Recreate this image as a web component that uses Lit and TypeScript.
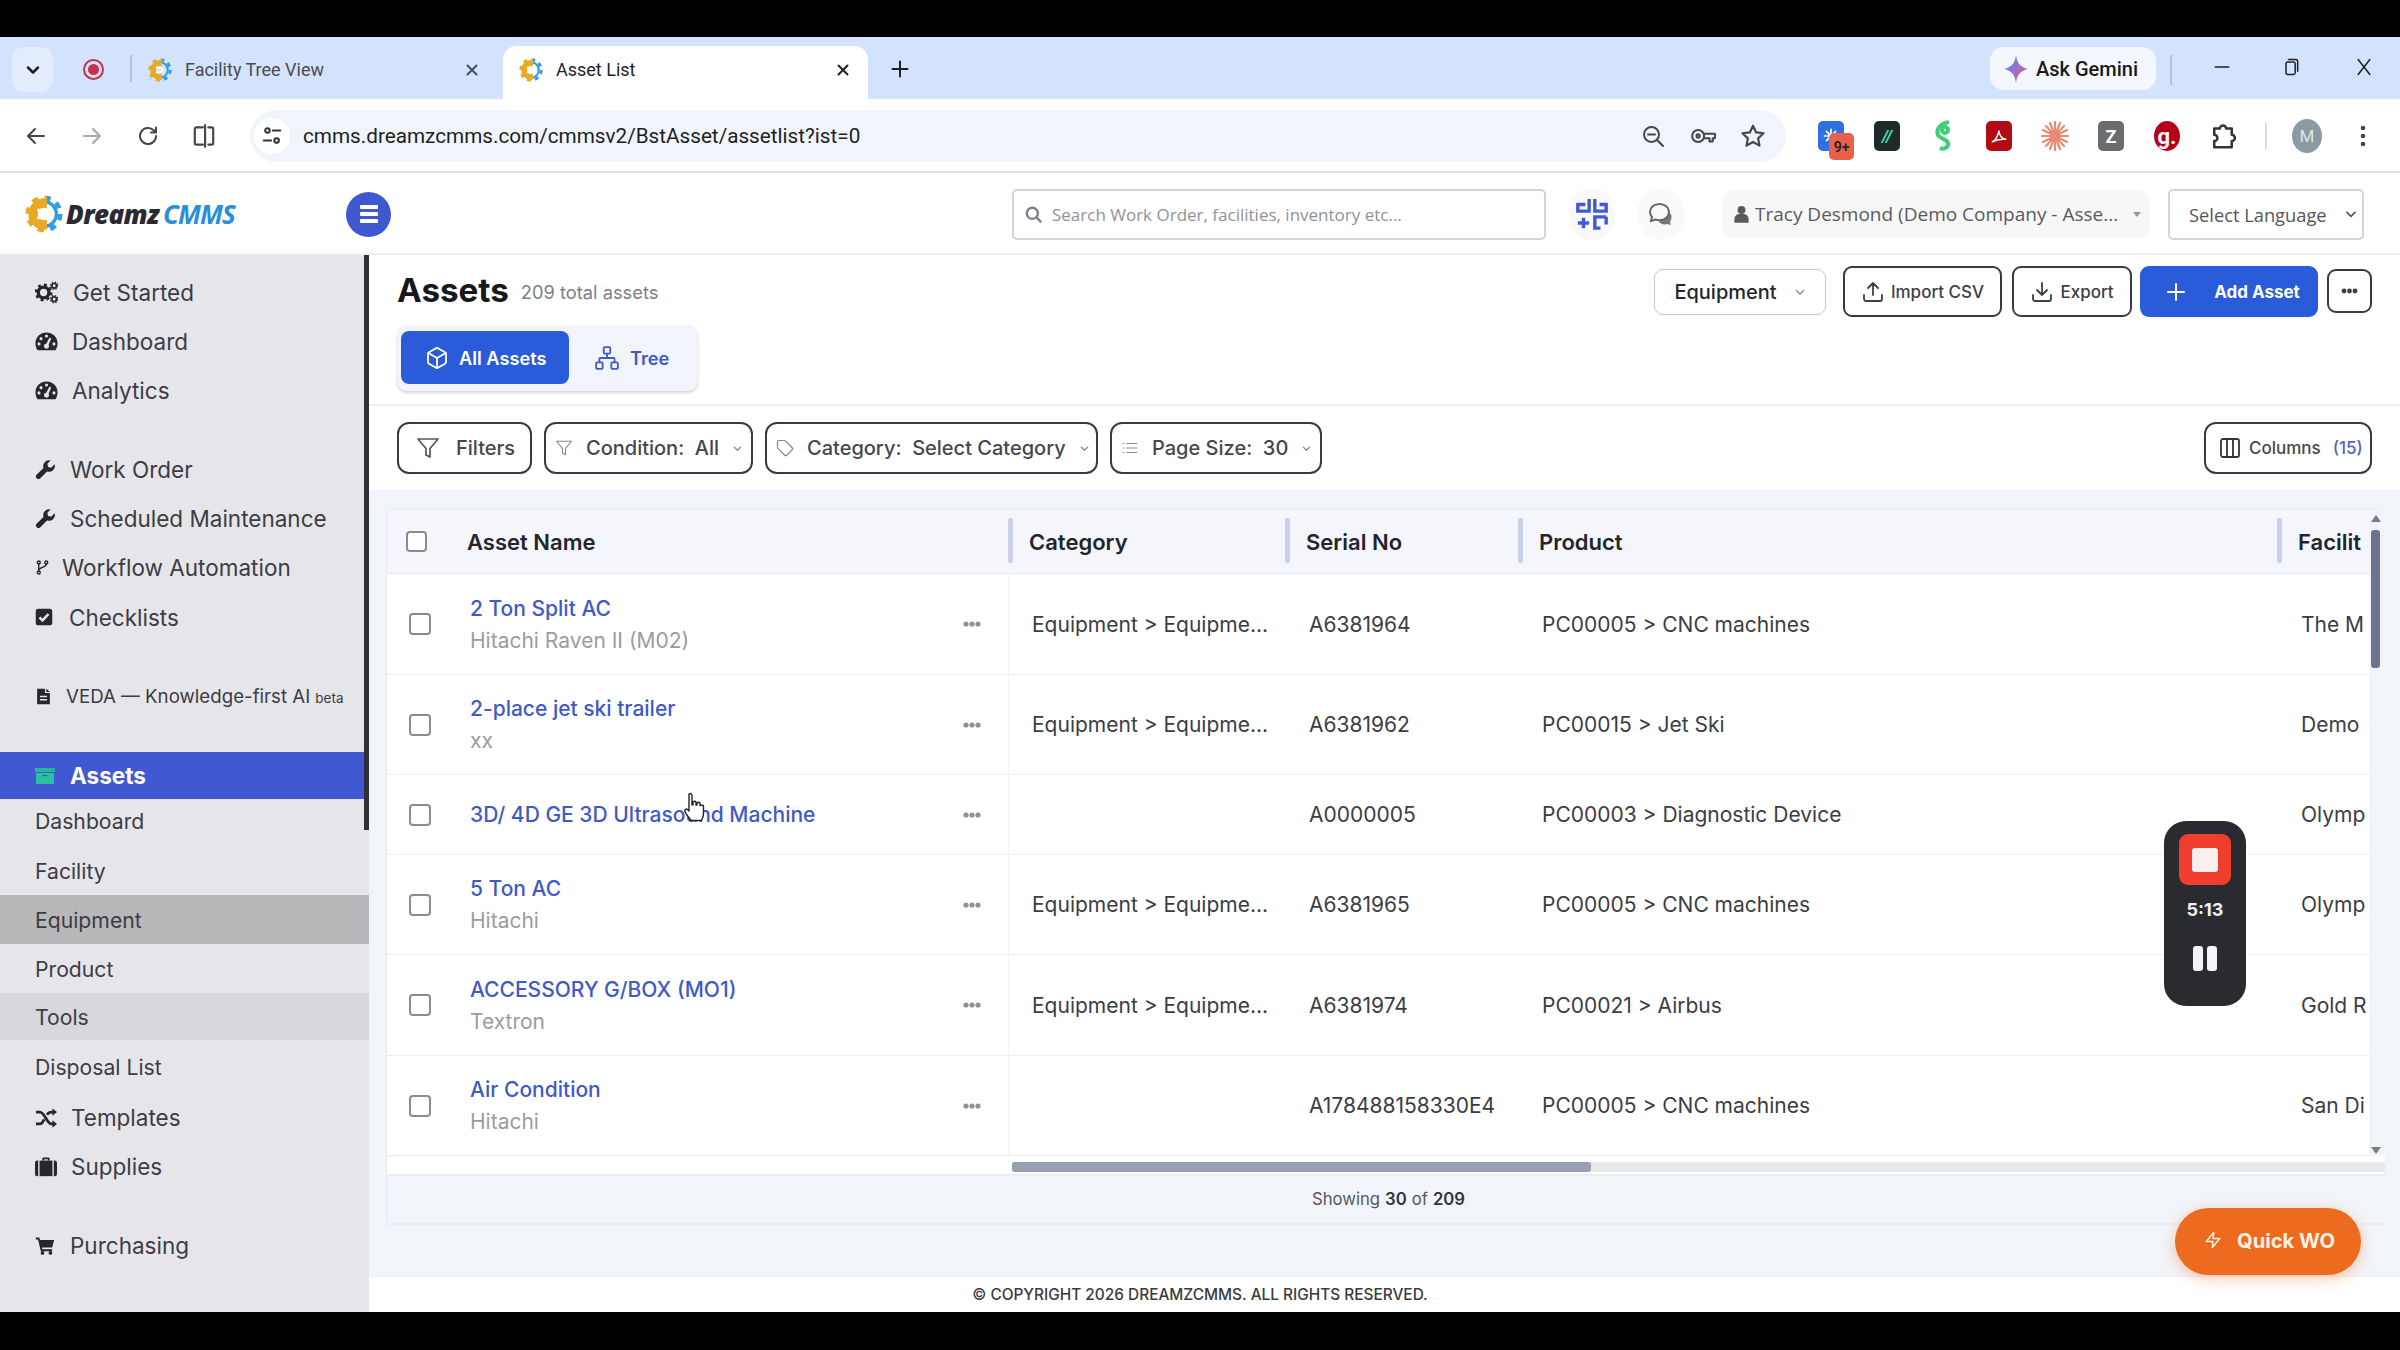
import { LitElement, html, css, svg } from "lit";
import { customElement } from "lit/decorators.js";

const ln = (paths: any, size = 22, sw = 2) => html`<svg class="ic" width=${size} height=${size} viewBox="0 0 24 24" fill="none" stroke="currentColor" stroke-width=${sw} stroke-linecap="round" stroke-linejoin="round">${paths}</svg>`;
const fl = (paths: any, w = 24, h = 24, vb = "0 0 24 24") => html`<svg class="ic" width=${w} height=${h} viewBox=${vb} fill="currentColor">${paths}</svg>`;

const gear = (size: number, uid: string) => html`<svg class="ic" width=${size} height=${size} viewBox="0 0 40 40">
  <defs><clipPath id="l${uid}"><rect x="0" y="0" width="23" height="40"/></clipPath><clipPath id="r${uid}"><rect x="23" y="0" width="17" height="40"/></clipPath></defs>
  <g clip-path="url(#l${uid})" fill="none" stroke="#e8a923"><circle cx="20" cy="20" r="11.500" stroke-width="10"/><circle cx="20" cy="20" r="17" stroke-width="5" stroke-dasharray="6.500 6.850"/></g>
  <g clip-path="url(#r${uid})" fill="none" stroke="#2f9fdf"><circle cx="20" cy="20" r="13" stroke-width="3.500"/><circle cx="20" cy="20" r="17" stroke-width="5" stroke-dasharray="6.500 6.850"/></g>
  <path d="M13 16h7a4 4 0 0 1 0 8h-7" fill="none" stroke="#fff" stroke-width="3"/>
</svg>`;

const ICONS: Record<string, any> = {
  cogs: fl(svg`<circle cx="9" cy="12" r="5.600" fill="none" stroke="currentColor" stroke-width="3.600"/><circle cx="9" cy="12" r="8" fill="none" stroke="currentColor" stroke-width="2.600" stroke-dasharray="3 3.300"/><circle cx="20" cy="5" r="2.400" fill="none" stroke="currentColor" stroke-width="1.800"/><circle cx="20" cy="19" r="2.400" fill="none" stroke="currentColor" stroke-width="1.800"/><circle cx="20" cy="5" r="3.800" fill="none" stroke="currentColor" stroke-width="1.300" stroke-dasharray="1.600 1.400"/><circle cx="20" cy="19" r="3.800" fill="none" stroke="currentColor" stroke-width="1.300" stroke-dasharray="1.600 1.400"/>`, 23, 23),
  gauge: fl(svg`<path d="M12 2.500A11.500 11.500 0 0 0 .5 14c0 2.600.8 5 2.200 7h18.600c1.400-2 2.200-4.400 2.200-7A11.500 11.500 0 0 0 12 2.500z"/><g fill="#e6e6ea"><circle cx="12" cy="6.200" r="1.600"/><circle cx="6.300" cy="9" r="1.600"/><circle cx="4.200" cy="14.500" r="1.600"/><circle cx="19.800" cy="14.500" r="1.600"/><circle cx="12" cy="17" r="2.600"/><path d="M11 16l4-8 2 .8-3.400 8z"/></g>`, 23, 23),
  wrench: fl(svg`<path d="M16 1.500a6.600 6.600 0 0 0-6.300 8.700L2 17.800a2.900 2.900 0 1 0 4.100 4.100l7.700-7.700A6.600 6.600 0 0 0 22.400 6l-3.900 3.900-3.500-.9-.9-3.500L17.900 1.700A6.600 6.600 0 0 0 16 1.500z"/>`, 21, 21),
  branch: ln(svg`<circle cx="6" cy="4" r="2.400"/><circle cx="6" cy="20" r="2.400"/><circle cx="18" cy="4" r="2.400"/><path d="M6 6.400v11.200M18 6.400c0 6-12 4.600-12 10"/>`, 15, 2.200),
  check: fl(svg`<rect x="1" y="1" width="22" height="22" rx="3.500"/><path d="M6 12.500l4 4 8-8.500" fill="none" stroke="#e6e6ea" stroke-width="3.400"/>`, 18, 18),
  file: fl(svg`<path d="M3 1h11v6h7v16H3z"/><path d="M16 1l5 4.500h-5z"/><path d="M7 12h10M7 16.500h10" stroke="#e6e6ea" stroke-width="2"/>`, 17, 19),
  box: html`<svg class="ic" width="20" height="16" viewBox="0 0 20 16"><path d="M0 0h20v4H0z" fill="#29b59c"/><path d="M1 5h18v11H1z" fill="#2bbfa3"/><path d="M7.500 7h5v1.200h-5z" fill="#1e6f68"/></svg>`,
  random: fl(svg`<path d="M1 5.500h4.500c5 0 7.500 13 12.500 13h1.500M1 18.500h4.500c2.500 0 3.500-3 4.500-5M13 8.500c1.200-1.700 2.800-3 5-3h1.500" fill="none" stroke="currentColor" stroke-width="3"/><path d="M19 1.500l5 4-5 4zM19 14.500l5 4-5 4z"/>`, 22, 22),
  case: fl(svg`<path d="M8 5V3a1.500 1.500 0 0 1 1.500-1.500h5A1.500 1.500 0 0 1 16 3v2h-2V3.500h-4V5z"/><rect x="5" y="5" width="14" height="17"/><path d="M0 7.500A2.500 2.500 0 0 1 2.500 5H3.500v17H2.500A2.500 2.500 0 0 1 0 19.500zM24 7.500A2.500 2.500 0 0 0 21.500 5H20.500v17h1A2.500 2.500 0 0 0 24 19.500z"/>`, 22, 22),
  cart: fl(svg`<path d="M1 3h4.200l.8 3h17l-2.400 9H8.400l.5 2h11.600v2.400H7L3.600 5.400H1z"/><circle cx="9" cy="21.500" r="2.200"/><circle cx="18.500" cy="21.500" r="2.200"/>`, 20, 20),
};

const NAV = [
  { t: "Get Started", i: "cogs", x: 15, h: 49 },
  { t: "Dashboard", i: "gauge", x: 14, h: 49 },
  { t: "Analytics", i: "gauge", x: 14, h: 49, gap: 30 },
  { t: "Work Order", i: "wrench", x: 14, h: 49 },
  { t: "Scheduled Maintenance", i: "wrench", x: 14, h: 49 },
  { t: "Workflow Automation", i: "branch", x: 12, h: 49 },
  { t: "Checklists", i: "check", x: 16, h: 50, gap: 30 },
];

const SUBS = [
  { t: "Dashboard", c: "top" }, { t: "Facility", c: "" }, { t: "Equipment", c: "hover" },
  { t: "Product", c: "" }, { t: "Tools", c: "soft" }, { t: "Disposal List", c: "" },
];

const ROWS = [
  { n: "2 Ton Split AC", s: "Hitachi Raven II (M02)", c: "Equipment > Equipme...", sn: "A6381964", p: "PC00005 > CNC machines", f: "The M", h: 101 },
  { n: "2-place jet ski trailer", s: "xx", c: "Equipment > Equipme...", sn: "A6381962", p: "PC00015 > Jet Ski", f: "Demo", h: 100 },
  { n: "3D/ 4D GE 3D Ultrasound Machine", s: "", c: "", sn: "A0000005", p: "PC00003 > Diagnostic Device", f: "Olymp", h: 80 },
  { n: "5 Ton AC", s: "Hitachi", c: "Equipment > Equipme...", sn: "A6381965", p: "PC00005 > CNC machines", f: "Olymp", h: 100 },
  { n: "ACCESSORY G/BOX (MO1)", s: "Textron", c: "Equipment > Equipme...", sn: "A6381974", p: "PC00021 > Airbus", f: "Gold R", h: 101 },
  { n: "Air Condition", s: "Hitachi", c: "", sn: "A178488158330E4", p: "PC00005 > CNC machines", f: "San Di", h: 100 },
];

const chev = (w = 12) => html`<svg class="ic" width=${w} height=${w} viewBox="0 0 12 12" fill="none" stroke="currentColor" stroke-width="1.500" stroke-linecap="round" stroke-linejoin="round"><path d="M2.500 4.500 6 8l3.500-3.500"/></svg>`;
const filterIc = (s: number, sw = 1.6) => ln(svg`<path d="M22 3H2l8 9.460V19l4 2v-8.540z"/>`, s, sw);

@customElement("app-root")
export class AppRoot extends LitElement {
  static styles = css`
    :host { display: block; width: 2400px; height: 1350px; font-family: Inter, "Liberation Sans", sans-serif; color: #333; }
    * { box-sizing: border-box; }
    .ic { display: block; flex: none; }
    .frame { position: relative; width: 2400px; height: 1350px; overflow: hidden; display: flex; flex-direction: column; background: #fff; }
    .black-top { height: 37px; background: #000; flex: none; }
    .black-bottom { height: 38px; background: #000; flex: none; }

    .tabstrip { height: 62px; flex: none; display: flex; align-items: flex-start; background: #d3e3fd; padding-left: 12px; font-family: Roboto, sans-serif; font-size: 18px; }
    .tabsearch { width: 41px; height: 45px; margin-top: 10px; border-radius: 12px; background: #e4edfd; display: flex; align-items: center; justify-content: center; color: #1f1f1f; }
    .rec { margin: 22px 0 0 30px; width: 21px; height: 21px; border-radius: 50%; border: 2px solid #c2334d; display: flex; align-items: center; justify-content: center; }
    .rec i { display: block; width: 11px; height: 11px; border-radius: 50%; background: #c9304b; }
    .tabsep { width: 2px; height: 27px; margin: 18px 0 0 26px; background: #b4c4dc; }
    .tab { width: 365px; height: 53px; margin-top: 9px; padding: 0 16px 6px 16px; display: flex; align-items: center; gap: 13px; color: #4a4c50; }
    .tab.active { background: #fff; border-radius: 14px 14px 0 0; margin-left: 6px; color: #1f1f1f; }
    .tab span { flex: 1; }
    .plus { margin: 22px 0 0 22px; color: #1f1f1f; }
    .spacer { flex: 1; }
    .gemini { width: 166px; height: 43px; margin-top: 10px; border-radius: 14px; background: #f4f7fe; display: flex; align-items: center; padding-left: 14px; gap: 8px; color: #1a1a1a; font-weight: 500; font-size: 20px; }
    .winsep { width: 2px; height: 30px; margin: 18px 15px 0 14px; background: #b4c4dc; }
    .winbtn { width: 69px; height: 62px; margin-top: -1px; display: flex; align-items: center; justify-content: center; color: #1f1f1f; }
    .winbtn.x { margin-left: 4px; margin-right: 2px; }

    .toolbar { height: 74px; flex: none; display: flex; align-items: center; padding-left: 8px; padding-top: 2px; background: #fff; border-bottom: 2px solid #e3e3e5; font-family: Roboto, sans-serif; }
    .navbtn { width: 56px; display: flex; justify-content: center; color: #444746; }
    .navbtn.dim { color: #a5a8ac; }
    .pill { width: 1536px; height: 52px; margin-left: 18px; border-radius: 26px; background: #f0f4fb; display: flex; align-items: center; padding-left: 4px; padding-right: 8px; }
    .site { width: 36px; height: 36px; border-radius: 50%; background: #fff; display: flex; align-items: center; justify-content: center; color: #333; }
    .url { margin-left: 13px; font-size: 20.700px; color: #1f1f1f; flex: 1; }
    .pillbtn { width: 50px; display: flex; justify-content: center; color: #444746; }
    .exts { display: flex; margin-left: 17px; }
    .ext { width: 56px; height: 34px; display: flex; justify-content: center; align-items: center; position: relative; }
    .ext b { display: flex; align-items: center; justify-content: center; width: 26px; height: 30px; border-radius: 5px; color: #fff; font-weight: 700; font-size: 18px; }
    .badge { position: absolute; left: 26px; top: 14px; width: 25px; height: 27px; border-radius: 5px; background: #e8604c; color: #222; font-size: 14px; font-weight: 600; display: flex; align-items: center; justify-content: center; }
    .tsep { width: 2px; height: 28px; margin-left: 14px; background: #dadce0; }
    .avatar { width: 30px; height: 34px; margin-left: 25px; border-radius: 50%; background: #8c9ba3; color: #dfe6ea; font-size: 17px; display: flex; align-items: center; justify-content: center; }
    .dots { width: 40px; margin-left: 21px; display: flex; justify-content: center; color: #444746; }

    .apphead { height: 82px; flex: none; display: flex; align-items: center; padding-left: 25px; border-bottom: 2px solid #eef0f2; padding-top: 2px; }
    .logo { display: flex; align-items: center; width: 321px; font-style: italic; font-weight: 800; font-size: 26px; font-family: "Open Sans", sans-serif; color: #2a2a30; }
    .logo .d { margin-left: 3px; letter-spacing: -.6px; }
    .logo .c { margin-left: 4px; color: #2a8fd8; font-weight: 700; letter-spacing: -.9px; }
    .burger { width: 45px; height: 45px; border-radius: 50%; background: #3f58cf; display: flex; flex-direction: column; align-items: center; justify-content: center; gap: 3px; }
    .burger i { display: block; width: 18px; height: 4px; border-radius: 1px; background: #fff; }
    .search { width: 534px; height: 51px; margin-left: 621px; border: 2px solid #d4d4d6; border-radius: 5px; display: flex; align-items: center; padding-left: 10px; gap: 9px; font-size: 17px; font-family: "Open Sans", sans-serif; color: #7d8086; }
    .search span { color: #8f9296; }
    .hicon { width: 46px; height: 52px; border-radius: 23px; background: #f9f9fb; display: flex; align-items: center; justify-content: center; }
    .h1 { margin-left: 23px; color: #3f5bd0; }
    .h2 { margin-left: 23px; color: #666; }
    .user { width: 428px; height: 48px; margin-left: 38px; border-radius: 14px; background: #f7f7f8; display: flex; align-items: center; padding-left: 10px; gap: 4px; color: #5a5a5e; font-size: 19px; font-family: "Open Sans", sans-serif; }
    .user span { flex: 1; white-space: nowrap; }
    .user .car { width: 0; height: 0; border-left: 4px solid transparent; border-right: 4px solid transparent; border-top: 5px solid #999; margin-right: 9px; }
    .lang { width: 196px; height: 51px; margin-left: 18px; border: 2px solid #d4d4d6; border-radius: 5px; display: flex; align-items: center; padding-left: 19px; gap: 17px; color: #555; font-size: 18.300px; font-family: "Open Sans", sans-serif; white-space: nowrap; }

    .body { flex: 1; min-height: 0; display: flex; }
    .side { position: relative; width: 369px; flex: none; background: #e6e6ea; padding-top: 13px; color: #3c3c44; font-size: 22.500px; }
    .thumb { position: absolute; right: 0; top: 0; width: 5px; height: 575px; background: #303036; }
    .nav { display: flex; align-items: center; padding-left: 35px; color: #3c3c44; }
    .nav .ic { color: #26262c; }
    .nav.veda { height: 49px; margin-bottom: 31px; font-size: 18.700px; gap: 14px; }
    .nav.veda small { font-size: 13.500px; margin-left: 5px; }
    .nav.veda em { font-style: normal; }
    .nav.cur { height: 47px; width: 364px; background: #4059d3; color: #fff; font-weight: 700; gap: 15px; }
    .sub { height: 49px; padding-left: 35px; display: flex; align-items: center; font-size: 21.200px; }
    .sub.top { height: 47px; padding-bottom: 4px; }
    .sub.hover { background: #b8b8ba; }
    .sub.soft { background: #d8d8dc; height: 47px; margin-bottom: 2px; }
    .nav.t1 { height: 49px; gap: 14px; margin-top: 2px; }
    .nav.t2 { height: 49px; gap: 14px; margin-bottom: 30px; }
    .nav.t3 { height: 48px; gap: 15px; }

    .main { flex: 1; min-width: 0; display: flex; flex-direction: column; }
    .pagehead { height: 151px; flex: none; display: flex; justify-content: space-between; padding: 11px 28px 0; border-bottom: 2px solid #eceef1; }
    .titlerow { height: 48px; display: flex; align-items: center; gap: 12px; margin-bottom: 11px; }
    .titlerow h1 { margin: 0; font-size: 33.200px; font-weight: 700; color: #17181c; }
    .titlerow span { font-size: 18.300px; color: #7c7f86; margin-top: 4px; }
    .seg { width: 301px; height: 66px; border-radius: 10px; background: #f2f4fb; box-shadow: 0 2px 3px rgba(60,60,80,.22); padding: 6px 4px; display: flex; }
    .seg button { all: unset; box-sizing: border-box; display: flex; align-items: center; font-size: 18.200px; font-weight: 600; font-family: Inter, sans-serif; gap: 10px; }
    .seg .on { width: 168px; height: 53px; padding-left: 24px; border-radius: 8px; background: #2a5bd8; color: #fff; }
    .seg .off { padding-left: 25px; color: #3f5bc4; }
    .actions { display: flex; align-items: flex-start; }
    .btn { display: flex; align-items: center; justify-content: center; background: #fff; border: 2px solid #3a3a40; border-radius: 9px; color: #3e4047; font-size: 17px; font-weight: 500; }
    .eq { width: 172px; height: 46px; margin-top: 3px; border: 1.500px solid #c3c6de; gap: 17px; font-size: 20px; color: #24262c; font-weight: 500; }
    .eq .ic { color: #8a8d96; }
    .imp { width: 159px; height: 51px; margin-left: 17px; gap: 6px; }
    .exp { width: 120px; height: 51px; margin-left: 10px; gap: 6px; }
    .add { width: 178px; height: 51px; margin-left: 8px; background: #2a5bd8; border: 0; color: #fff; font-weight: 700; gap: 26px; padding-left: 6px; }
    .more { width: 45px; height: 44px; margin-left: 9px; margin-top: 3px; }

    .filters { height: 84px; flex: none; display: flex; align-items: center; padding: 0 28px; gap: 12px; background: #fff; }
    .f { height: 52px; border: 2px solid #3a3a40; border-radius: 12px; display: flex; align-items: center; font-size: 20px; font-weight: 500; color: #45474e; white-space: nowrap; }
    .f .lbl { white-space: pre; }
    .f .ic { color: #85888f; }
    .f .chv { margin-left: auto; }
    .f1 { width: 135px; padding-left: 17px; gap: 16px; }
    .f1 .ic { color: #555; }
    .f2, .f3, .f4 { padding: 0 9px; gap: 13px; }
    .f2 { width: 209px; }
    .f3 { width: 333px; }
    .f4 { width: 212px; }
    .cols { width: 168px; margin-left: auto; height: 52px; border: 2px solid #3a3a40; border-radius: 12px; display: flex; align-items: center; padding-left: 12px; gap: 7px; font-size: 17px; font-weight: 500; color: #45474e; white-space: nowrap; }
    .cols b { font-weight: 500; color: #5461c8; margin-left: 5px; }
    .cols .ic { color: #333; }

    .area { flex: 1; min-height: 0; background: #f1f4f8; padding: 18px 15px 0 17px; }
    .card { position: relative; height: 717px; border-top: 2px solid #eceff4; border-left: 1px solid #e6e9ef; background: #f1f4f8; border-radius: 6px 6px 0 0; border-bottom: 2px solid #e9ecf1; }
    .scroll { overflow: hidden; width: 1982px; background: #fff; }
    .thead { display: grid; grid-template-columns: 622px 277px 233px 759px 120px; height: 64px; background: #f4f6fc; border-bottom: 1px solid #e6e9f0; font-weight: 600; font-size: 22px; color: #23252c; width: 2011px; }
    .th { display: flex; align-items: center; padding-left: 16px; border-left: 4px solid transparent; position: relative; }
    .th.bar::before { content: ""; position: absolute; left: -5px; top: 8px; bottom: 10px; width: 5px; background: #c9d1ea; border-radius: 2px; }
    .th.first { padding-left: 19px; border: 0; }
    .th.first .lab { margin-left: 40px; }
    .th .box { width: 21px; height: 21px; }
    .row { display: grid; grid-template-columns: 622px 277px 233px 759px 120px; border-bottom: 1px solid #eceef2; font-size: 21px; color: #3b3d44; width: 2011px; align-items: stretch; }
    .cell { display: flex; align-items: center; padding-left: 23px; white-space: nowrap; }
    .namecell { padding-left: 22px; border-right: 1px solid #f0f1f5; gap: 39px; }
    .box { width: 22px; height: 22px; flex: none; border: 2px solid #8a8b90; border-radius: 4px; background: #fff; }
    .nm { width: 454px; display: flex; flex-direction: column; gap: 9px; }
    .nm a { color: #3f5ac6; font-weight: 500; line-height: 23px; }
    .nm span { color: #9a9ca2; line-height: 23px; }
    .rowdots { color: #8f9197; }
    .hbar { height: 20px; background: #fff; padding-top: 6px; border-bottom: 2px solid #e9ecf1; padding-left: 626px; }
    .hbar div { height: 10px; background: #e8e8ea; position: relative; margin-left: -1px; }
    .hbar i { display: block; width: 579px; height: 10px; background: #999eb3; border-radius: 3px; }
    .tfoot { height: 46px; display: flex; align-items: center; justify-content: center; padding-left: 10px; font-size: 16.700px; color: #55575e; }
    .tfoot b { color: #33353b; font-weight: 600; margin: 0 5px; }
    .vbar { position: absolute; right: 0; top: 3px; width: 17px; height: 642px; }
    .vbar .th1 { position: absolute; left: 3px; top: 17px; width: 9px; height: 138px; background: #6b7390; border-radius: 3px; }
    .vbar .up, .vbar .dn { position: absolute; left: 3px; width: 0; height: 0; border-left: 5px solid transparent; border-right: 5px solid transparent; }
    .vbar .up { top: 2px; border-bottom: 7px solid #777a88; }
    .vbar .dn { bottom: 1px; border-top: 7px solid #777a88; }

    .foot { height: 35px; flex: none; background: #fff; display: flex; align-items: center; justify-content: center; padding-right: 369px; font-size: 15.400px; font-weight: 500; color: #3a3a40; }

    .recw { position: absolute; left: 2164px; top: 821px; width: 82px; height: 185px; border-radius: 22px; background: #2a2b30; display: flex; flex-direction: column; align-items: center; padding-top: 13px; color: #eee; }
    .recw .stop { width: 52px; height: 51px; border-radius: 9px; background: #ef3e2e; display: flex; align-items: center; justify-content: center; }
    .recw .stop i { display: block; width: 26px; height: 24px; border-radius: 3px; background: #fbeeee; }
    .recw .tm { margin-top: 14px; font-size: 18px; font-weight: 700; }
    .recw .pz { margin-top: 26px; display: flex; gap: 4px; }
    .recw .pz i { display: block; width: 10px; height: 25px; border-radius: 3px; background: #f4f4f4; }
    .quick { position: absolute; left: 2175px; top: 1208px; width: 186px; height: 67px; border-radius: 34px; background: #ec6b1e; box-shadow: 0 4px 14px rgba(236,107,30,.35); color: #fff1e6; display: flex; align-items: center; padding: 0 0 3px 29px; gap: 15px; font-size: 20.200px; font-weight: 700; }
    .cursor { position: absolute; left: 684px; top: 792px; color: #222; }
  `;

  private nav(n: any) {
    return html`<div class="nav" style="height:${n.h}px;gap:${n.x}px;${n.gap ? `margin-bottom:${n.gap}px` : ""}">${ICONS[n.i]}<span>${n.t}</span></div>`;
  }

  private row(r: any) {
    return html`<div class="row" style="height:${r.h}px">
      <div class="cell namecell"><div class="box"></div><div class="nm"><a>${r.n}</a>${r.s ? html`<span>${r.s}</span>` : ""}</div>
        <div class="rowdots">${fl(svg`<circle cx="3" cy="6" r="2.600"/><circle cx="9" cy="6" r="2.600"/><circle cx="15" cy="6" r="2.600"/>`, 18, 12, "0 0 18 12")}</div></div>
      <div class="cell">${r.c}</div><div class="cell">${r.sn}</div><div class="cell">${r.p}</div><div class="cell">${r.f}</div>
    </div>`;
  }

  render() {
    return html`<div class="frame">
      <div class="black-top"></div>
      <div class="tabstrip">
        <div class="tabsearch">${ln(svg`<path d="m6 9 6 6 6-6"/>`, 20, 3)}</div>
        <div class="rec"><i></i></div>
        <div class="tabsep"></div>
        <div class="tab">${gear(24, "a")}<span>Facility Tree View</span>${ln(svg`<path d="M6 6l12 12M18 6 6 18"/>`, 18, 2.600)}</div>
        <div class="tab active">${gear(24, "b")}<span>Asset List</span>${ln(svg`<path d="M6 6l12 12M18 6 6 18"/>`, 18, 2.600)}</div>
        <div class="plus">${ln(svg`<path d="M12 3v18M3 12h18"/>`, 20, 2.400)}</div>
        <div class="spacer"></div>
        <div class="gemini"><svg class="ic" width="24" height="28" viewBox="0 0 24 28"><defs><linearGradient id="gm" x1="0" y1="0" x2="1" y2="1"><stop offset="0" stop-color="#4285f4"/><stop offset=".5" stop-color="#9b72cb"/><stop offset="1" stop-color="#e8543f"/></linearGradient></defs><path d="M12 0c1 8 4 12 12 14-8 2-11 6-12 14-1-8-4-12-12-14 8-2 11-6 12-14z" fill="url(#gm)"/></svg><span>Ask Gemini</span></div>
        <div class="winsep"></div>
        <div class="winbtn">${ln(svg`<path d="M4 12h16"/>`, 20, 2)}</div>
        <div class="winbtn">${ln(svg`<rect x="6" y="6" width="11" height="15" rx="2"/><path d="M9 3h9a2 2 0 0 1 2 2v12"/>`, 20, 1.800)}</div>
        <div class="winbtn x">${ln(svg`<path d="M5 3l14 18M19 3 5 21"/>`, 20, 1.800)}</div>
      </div>
      <div class="toolbar">
        <div class="navbtn">${ln(svg`<path d="M20 12H5M11 5l-7 7 7 7"/>`, 24, 2)}</div>
        <div class="navbtn dim">${ln(svg`<path d="M4 12h15M13 5l7 7-7 7"/>`, 24, 2)}</div>
        <div class="navbtn">${ln(svg`<path d="M20 12a8 8 0 1 1-2.400-5.700L20 8.500M20 3.500v5h-5"/>`, 24, 2)}</div>
        <div class="navbtn">${ln(svg`<path d="M11 4H5a1.500 1.500 0 0 0-1.500 1.500v13A1.500 1.500 0 0 0 5 20h6M13 2v20M16 4h3a1.500 1.500 0 0 1 1.500 1.500v13A1.500 1.500 0 0 1 19 20h-3"/>`, 26, 2)}</div>
        <div class="pill">
          <div class="site">${ln(svg`<circle cx="7" cy="6" r="2.500"/><path d="M13 6h8M3 17h8"/><circle cx="17" cy="17" r="2.500"/>`, 22, 2.200)}</div>
          <div class="url">cmms.dreamzcmms.com/cmmsv2/BstAsset/assetlist?ist=0</div>
          <div class="pillbtn">${ln(svg`<circle cx="10.500" cy="10.500" r="7.500"/><path d="M16 16l6 6M7 10.500h7"/>`, 24, 2)}</div>
          <div class="pillbtn">${ln(svg`<circle cx="7.500" cy="12" r="5.500"/><circle cx="7.500" cy="12" r="1.500"/><path d="M13 10h10v4h-2v3h-3v-3h-5"/>`, 26, 1.900)}</div>
          <div class="pillbtn">${ln(svg`<path d="m12 2.500 2.900 6.200 6.800.8-5 4.700 1.300 6.700-6-3.300-6 3.300 1.300-6.700-5-4.700 6.800-.8z"/>`, 26, 2)}</div>
        </div>
        <div class="exts">
          <div class="ext"><b style="background:#2f6fe0">${ln(svg`<path d="M12 4v16M4 12h16M6.500 6.500l11 11M17.500 6.500l-11 11"/>`, 20, 2)}</b><div class="badge">9+</div></div>
          <div class="ext"><b style="background:#1f2a2c;color:#3fe0a8;font-style:italic;font-size:17px">//</b></div>
          <div class="ext"><svg class="ic" width="20" height="32" viewBox="0 0 20 32" fill="none" stroke="#3ecf7a" stroke-width="4"><path d="M16 2C6 4 3 10 5 15c2 4 9 4 10 8 1 4-4 7-8 5"/><circle cx="12" cy="10" r="3"/></svg></div>
          <div class="ext"><b style="background:#b30b13">${ln(svg`<path d="M4 19c3-1 6-6 8-13 .500 5 3 9 8 10-5-.500-11 0-16 3z"/>`, 20, 1.800)}</b></div>
          <div class="ext"><svg class="ic" width="28" height="30" viewBox="0 0 28 30" stroke="#e88b75" stroke-width="2.200" stroke-linecap="round"><path d="M14 1v28M1 15h26M5 5l18 20M23 5 5 25M9 2l10 26M19 2 9 28M2 9l24 12M26 9 2 21"/></svg></div>
          <div class="ext"><b style="background:#6c6c6c">Z</b></div>
          <div class="ext"><b style="background:#b5001c;width:26px;height:30px;border-radius:50%;font-size:22px">g.</b></div>
          <div class="ext" style="color:#333">${ln(svg`<path d="M5 6h4.500a2.500 2.500 0 0 1 5 0H19v5a2.500 2.500 0 0 1 0 5v5H5v-5a2.500 2.500 0 0 0 0-5z"/>`, 30, 2)}</div>
        </div>
        <div class="tsep"></div>
        <div class="avatar">M</div>
        <div class="dots">${fl(svg`<circle cx="12" cy="4" r="2.300"/><circle cx="12" cy="12" r="2.300"/><circle cx="12" cy="20" r="2.300"/>`, 24, 24)}</div>
      </div>
      <div class="apphead">
        <div class="logo">${gear(38, "c")}<span class="d">Dreamz</span><span class="c">CMMS</span></div>
        <div class="burger"><i></i><i></i><i></i></div>
        <div class="search">${ln(svg`<circle cx="10.500" cy="10.500" r="7"/><path d="m16 16 5 5"/>`, 19, 3)}<span>Search Work Order, facilities, inventory etc...</span></div>
        <div class="hicon h1"><svg class="ic" width="34" height="34" viewBox="0 0 36 36" fill="none" stroke="currentColor" stroke-width="3.600"><path d="M15 2v13H3V8h8M21 2v13h12V8h-7M9 22v11M3 27.500h12M33 21H21v12h6M33 21v8"/></svg></div>
        <div class="hicon h2"><svg class="ic" width="26" height="26" viewBox="0 0 26 26"><path d="M17 10l6 3c1 3 .5 6-1 8l1 3-4-1c-3 1-6 0-8-2z" fill="#777"/><path d="M11.500 3C6 3 2 6.500 2 11c0 2 .8 3.800 2 5l-1 4 4.500-1.500c1.200.5 2.600.7 4 .7 5.300 0 9.500-3.700 9.500-8.200S16.800 3 11.500 3z" fill="#f9f9fb" stroke="#666" stroke-width="2"/></svg></div>
        <div class="user">${fl(svg`<circle cx="12" cy="7" r="5"/><path d="M3 23v-5a7 7 0 0 1 7-6h4a7 7 0 0 1 7 6v5z"/>`, 19, 22)}<span>Tracy Desmond (Demo Company - Asse...</span><i class="car"></i></div>
        <div class="lang"><span>Select Language</span>${chev(14)}</div>
      </div>
      <div class="body">
        <aside class="side">
          <div class="thumb"></div>
          ${NAV.map((n) => this.nav(n))}
          <div class="nav veda">${ICONS.file}<em>VEDA — Knowledge-first AI<small>beta</small></em></div>
          <div class="nav cur">${ICONS.box}<span>Assets</span></div>
          ${SUBS.map((s) => html`<div class="sub ${s.c}">${s.t}</div>`)}
          <div class="nav t1">${ICONS.random}<span>Templates</span></div>
          <div class="nav t2">${ICONS.case}<span>Supplies</span></div>
          <div class="nav t3">${ICONS.cart}<span>Purchasing</span></div>
        </aside>
        <main class="main">
          <div class="pagehead">
            <div>
              <div class="titlerow"><h1>Assets</h1><span>209 total assets</span></div>
              <div class="seg">
                <button class="on">${ln(svg`<path d="M21 8a2 2 0 0 0-1-1.730l-7-4a2 2 0 0 0-2 0l-7 4A2 2 0 0 0 3 8v8a2 2 0 0 0 1 1.730l7 4a2 2 0 0 0 2 0l7-4A2 2 0 0 0 21 16Z"/><path d="m3.300 7 8.700 5 8.700-5M12 22V12"/>`, 24, 1.800)}All Assets</button>
                <button class="off">${ln(svg`<rect x="16" y="16" width="6" height="6" rx="1"/><rect x="2" y="16" width="6" height="6" rx="1"/><rect x="9" y="2" width="6" height="6" rx="1"/><path d="M5 16v-3a1 1 0 0 1 1-1h12a1 1 0 0 1 1 1v3M12 12V8"/>`, 26, 1.700)}Tree</button>
              </div>
            </div>
            <div class="actions">
              <div class="btn eq">Equipment ${chev(12)}</div>
              <div class="btn imp">${ln(svg`<path d="M21 15v4a2 2 0 0 1-2 2H5a2 2 0 0 1-2-2v-4M17 8l-5-5-5 5M12 3v12"/>`, 24, 1.800)}Import CSV</div>
              <div class="btn exp">${ln(svg`<path d="M21 15v4a2 2 0 0 1-2 2H5a2 2 0 0 1-2-2v-4M7 10l5 5 5-5M12 15V3"/>`, 24, 1.800)}Export</div>
              <div class="btn add">${ln(svg`<path d="M12 4v16M4 12h16"/>`, 24, 2)}Add Asset</div>
              <div class="btn more">${fl(svg`<circle cx="3" cy="6" r="2.400"/><circle cx="8.500" cy="6" r="2.400"/><circle cx="14" cy="6" r="2.400"/>`, 17, 12, "0 0 17 12")}</div>
            </div>
          </div>
          <div class="filters">
            <div class="f f1">${filterIc(24, 1.700)}<span class="lbl">Filters</span></div>
            <div class="f f2">${filterIc(18, 1.500)}<span class="lbl">Condition:  All</span><span class="chv">${chev(11)}</span></div>
            <div class="f f3">${ln(svg`<path d="M12.586 2.586A2 2 0 0 0 11.172 2H4a2 2 0 0 0-2 2v7.172a2 2 0 0 0 .586 1.414l8.704 8.704a2.426 2.426 0 0 0 3.420 0l6.580-6.580a2.426 2.426 0 0 0 0-3.420z"/>`, 18, 1.600)}<span class="lbl">Category:  Select Category</span><span class="chv">${chev(11)}</span></div>
            <div class="f f4">${ln(svg`<path d="M8 6h13M8 12h13M8 18h13M3 6h1M3 12h1M3 18h1"/>`, 18, 1.600)}<span class="lbl">Page Size:  30</span><span class="chv">${chev(11)}</span></div>
            <div class="cols">${ln(svg`<rect x="3" y="3" width="18" height="18" rx="2"/><path d="M9 3v18M15 3v18"/>`, 24, 1.800)}Columns <b>(15)</b></div>
          </div>
          <div class="area">
            <div class="card">
              <div class="scroll">
                <div class="thead">
                  <div class="th first"><div class="box"></div><span class="lab">Asset Name</span></div>
                  <div class="th bar">Category</div><div class="th bar">Serial No</div><div class="th bar">Product</div><div class="th bar">Facilit</div>
                </div>
                ${ROWS.map((r) => this.row(r))}
              </div>
              <div class="hbar"><div><i></i></div></div>
              <div class="tfoot">Showing <b>30</b> of <b>209</b></div>
              <div class="vbar"><span class="up"></span><div class="th1"></div><span class="dn"></span></div>
            </div>
          </div>
          <div class="foot">© COPYRIGHT 2026 DREAMZCMMS. ALL RIGHTS RESERVED.</div>
        </main>
      </div>
      <div class="black-bottom"></div>

      <div class="recw"><div class="stop"><i></i></div><div class="tm">5:13</div><div class="pz"><i></i><i></i></div></div>
      <div class="quick">${ln(svg`<path d="M13 2 3 14h9l-1 8 10-12h-9l1-8z"/>`, 18, 2)}<span>Quick WO</span></div>
      <svg class="cursor" width="22" height="32" viewBox="0 0 22 32" fill="#fff" stroke="#222" stroke-width="1.400" stroke-linejoin="round"><path d="M5 2c1.500-1 3 0 3 1.500V13l1-.2V10c1-1 2.500-1 3 0v3l1 0v-2c1-1 2.500-1 3 0v2.500l1 0c1-1 2.500-.5 2.500 1v7c0 3-1 5-2 7H7c-2-3-5-6-6-9-.5-2 1-3 2.500-2l1.500 1.500z"/></svg>
    </div>`;
  }
}
